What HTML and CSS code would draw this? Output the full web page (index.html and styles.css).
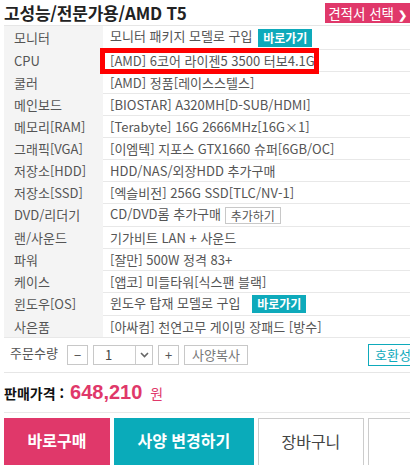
FILE: index.html
```html
<!DOCTYPE html>
<html lang="ko">
<head>
  <meta charset="UTF-8" />
  <meta name="viewport" content="width=device-width, initial-scale=1.0"/>
  <title>고성능/전문가용/AMD T5</title>
  <link rel="stylesheet" href="styles.css">
</head>
<body>
  <div class="wrap">
    <div class="head">
      <h1>고성능/전문가용/AMD T5</h1>
      <a class="pick" href="#">견적서 선택 <span class="chev">❯</span></a>
    </div>

    <table class="spec">
      <tr class="first"><td class="lbl">모니터</td><td class="val">모니터 패키지 모델로 구입 <a class="go" href="#">바로가기</a></td></tr>
      <tr><td class="lbl">CPU</td><td class="val"><span class="mark">[AMD] 6코어 라이젠5 3500 터보4.1G</span></td></tr>
      <tr><td class="lbl">쿨러</td><td class="val">[AMD] 정품[레이스스텔스]</td></tr>
      <tr><td class="lbl">메인보드</td><td class="val">[BIOSTAR] A320MH[D-SUB/HDMI]</td></tr>
      <tr><td class="lbl">메모리[RAM]</td><td class="val">[Terabyte] 16G 2666MHz[16G×1]</td></tr>
      <tr><td class="lbl">그래픽[VGA]</td><td class="val">[이엠텍] 지포스 GTX1660 슈퍼[6GB/OC]</td></tr>
      <tr><td class="lbl">저장소[HDD]</td><td class="val">HDD/NAS/외장HDD 추가구매</td></tr>
      <tr><td class="lbl">저장소[SSD]</td><td class="val">[엑슬비전] 256G SSD[TLC/NV-1]</td></tr>
      <tr class="tall"><td class="lbl">DVD/리더기</td><td class="val">CD/DVD롬 추가구매 <a class="add" href="#">추가하기</a></td></tr>
      <tr><td class="lbl">랜/사운드</td><td class="val">기가비트 LAN + 사운드</td></tr>
      <tr><td class="lbl">파워</td><td class="val">[잘만] 500W 정격 83+</td></tr>
      <tr><td class="lbl">케이스</td><td class="val">[앱코] 미들타워[식스팬 블랙]</td></tr>
      <tr class="tall"><td class="lbl">윈도우[OS]</td><td class="val">윈도우 탑재 모델로 구입 <a class="go os" href="#">바로가기</a></td></tr>
      <tr><td class="lbl">사은품</td><td class="val">[아싸컴] 천연고무 게이밍 장패드 [방수]</td></tr>
    </table>

    <div class="qty">
      <span class="qty-label">주문수량</span>
      <button class="box">−</button>
      <div class="sel"><span class="num">1</span><span class="arrow">
        <svg width="9" height="6" viewBox="0 0 9 6"><path d="M1 1 L4.5 4.5 L8 1" fill="none" stroke="#666" stroke-width="1.6"/></svg>
      </span></div>
      <button class="box">+</button>
      <button class="copy">사양복사</button>
      <button class="compat">호환성</button>
    </div>

    <div class="price">
      <span class="price-label">판매가격 :</span>
      <span class="amount">648,210</span>
      <span class="won">원</span>
    </div>

    <div class="actions">
      <a class="btn buy" href="#">바로구매</a>
      <a class="btn change" href="#">사양 변경하기</a>
      <a class="btn cart" href="#">장바구니</a>
      <a class="btn more" href="#"></a>
    </div>
  </div>
</body>
</html>
```

FILE: styles.css
```css
html, body {
  overflow: hidden;
}
body {
  margin: 0;
  font-family: "Noto Sans CJK KR", "Noto Sans", sans-serif;
  color: #555;
  font-size: 13px;
}
a {
  text-decoration: none;
}
.wrap {
  width: 470px;
  margin-left: 4px;
}
.head {
  display: flex;
  align-items: flex-start;
  justify-content: space-between;
  width: 406px;
  height: 25px;
}
h1 {
  margin: 0;
  padding-top: 2px;
  font-size: 17px;
  line-height: 22px;
  color: #222;
  letter-spacing: -0.2px;
}
.pick {
  margin-top: 3px;
  width: 85px;
  text-align: center;
  background: #e0386a;
  color: #fff;
  font-size: 13.5px;
  line-height: 20px;
  height: 20px;
  white-space: nowrap;
}
.chev {
  font-size: 11px;
  font-weight: bold;
}
.spec {
  border-collapse: collapse;
  width: 100%;
  border-top: 1px solid #e6e6e6;
}
.spec td {
  height: 21px;
  padding: 0;
  line-height: 16px;
  white-space: nowrap;
}
.spec .lbl {
  width: 89px;
  padding-left: 10px;
  background: #f4f4f4;
}
.spec .val {
  padding-left: 7px;
  border-bottom: 1px solid #e8e8e8;
}
.spec .first td {
  height: 23px;
}
.spec .tall td {
  height: 22px;
}
.go {
  display: inline-block;
  background: #0eaabb;
  color: #fff;
  font-weight: bold;
  font-size: 12px;
  line-height: 18px;
  padding: 0 5px;
  margin-left: 2px;
  vertical-align: middle;
}
.go.os {
  margin-left: 8px;
}
.add {
  display: inline-block;
  border: 1px solid #c8c8c8;
  color: #555;
  font-size: 12px;
  line-height: 15px;
  padding: 0 5px;
  vertical-align: middle;
}
.mark {
  display: inline-block;
  box-sizing: border-box;
  width: 209px;
  margin-left: -5px;
  padding-left: 5px;
  outline: 5px solid #f00;
}
.qty {
  display: flex;
  align-items: center;
  gap: 5px;
  height: 34px;
  border-bottom: 1px solid #e6e6e6;
  border-top: 1px solid #e8e8e8;
  margin-top: -1px;
}
.qty-label {
  padding-left: 6px;
  width: 52px;
  font-size: 13px;
  margin-top: -6px;
}
.qty button {
  font-family: inherit;
  background: #fff;
  border: 1px solid #c8c8c8;
  color: #555;
  height: 20px;
  padding: 0;
  font-size: 13px;
  line-height: 18px;
}
.qty .box {
  width: 21px;
}
.sel {
  display: flex;
  width: 58px;
  height: 18px;
  border: 1px solid #c8c8c8;
}
.sel .num {
  flex: 1;
  padding-left: 11px;
  line-height: 18px;
  color: #444;
}
.sel .arrow {
  width: 16px;
  border-left: 1px solid #ccc;
  display: flex;
  align-items: center;
  justify-content: center;
}
.qty .copy {
  width: 64px;
  color: #777;
}
.qty .compat {
  margin-left: 115px;
  border: 1px solid #0eaabb;
  color: #0eaabb;
  height: 22px;
  padding: 0 24px 0 6px;
  white-space: nowrap;
}
.price {
  display: flex;
  align-items: baseline;
  height: 39px;
  border-bottom: 1px solid #e8e8e8;
  line-height: 39px;
}
.price-label {
  font-size: 14px;
  font-weight: bold;
  color: #111;
}
.amount {
  margin-left: 6px;
  font-family: "Liberation Sans", Arial, sans-serif;
  font-size: 20px;
  font-weight: bold;
  color: #e0386a;
}
.won {
  margin-left: 8px;
  font-size: 14px;
  color: #e0386a;
}
.actions {
  display: flex;
  gap: 4px;
  margin-top: 5px;
}
.btn {
  box-sizing: border-box;
  height: 50px;
  line-height: 44px;
  text-align: center;
  font-size: 16px;
  font-weight: bold;
  color: #fff;
}
.buy {
  width: 118px;
  background: #e0386a;
}
.change {
  width: 156px;
  background: #0aabba;
}
.cart, .more {
  width: 118px;
  background: #fff;
  border: 1px solid #ccc;
  color: #444;
  font-weight: normal;
}
```
